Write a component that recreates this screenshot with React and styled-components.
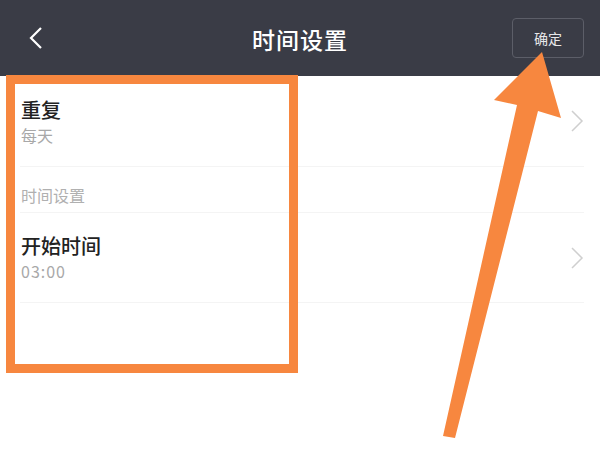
import React from 'react';
import styled, { createGlobalStyle } from 'styled-components';

const Global = createGlobalStyle`
  html, body { margin: 0; padding: 0; background: #fff; }
  body { font-family: "Noto Sans CJK SC", "Noto Sans", sans-serif; }
`;

const Page = styled.div`
  position: relative;
  width: 600px;
  height: 462px;
  overflow: hidden;
  background: #fff;
`;

const Header = styled.div`
  height: 76px;
  background: #3a3c46;
  display: grid;
  grid-template-columns: 100px 1fr 100px;
  align-items: center;
  color: #fff;
`;

const Back = styled.div`
  padding-left: 26px;
  display: flex;
  align-items: center;
`;

const Title = styled.div`
  text-align: center;
  font-size: 23px;
  font-weight: 500;
  letter-spacing: 1px;
  padding-top: 2px;
`;

const Right = styled.div`
  display: flex;
  justify-content: flex-end;
  padding-right: 16px;
`;

const Confirm = styled.div`
  width: 70px;
  height: 38px;
  border: 1px solid #5c5e68;
  border-radius: 4px;
  display: flex;
  align-items: center;
  justify-content: center;
  font-size: 14px;
  color: #e8e8ea;
`;

const Row = styled.div`
  height: ${p => p.h}px;
  margin-left: 20px;
  margin-right: 16px;
  border-bottom: 1px solid #f4f4f4;
  display: flex;
  align-items: center;
  justify-content: space-between;
  box-sizing: border-box;
`;

const Texts = styled.div`
  display: flex;
  flex-direction: column;
  gap: 5px;
  padding-left: 1px;
`;

const Label = styled.div`
  font-size: 20px;
  line-height: 23px;
  font-weight: 500;
  color: #222;
`;

const Sub = styled.div`
  font-size: 16px;
  line-height: 19px;
  color: #a8a8a8;
  letter-spacing: ${p => (p.wide ? '1px' : '0')};
`;

const Section = styled.div`
  font-size: 16px;
  color: #b0b0b0;
  padding-left: 1px;
  padding-top: 10px;
`;

const Frame = styled.div`
  position: absolute;
  left: 6px;
  top: 75px;
  width: 292px;
  height: 298px;
  box-sizing: border-box;
  border: 9px solid #f7873f;
  pointer-events: none;
`;

const Arrow = styled.svg`
  position: absolute;
  left: 0;
  top: 0;
  pointer-events: none;
`;

const Chevron = () => (
  <svg width="14" height="24" viewBox="0 0 14 24">
    <path d="M2 2 L12 12 L2 22" fill="none" stroke="#cfcfcf" strokeWidth="1.5" />
  </svg>
);

export default function App() {
  return (
    <Page>
      <Global />
      <Header>
        <Back>
          <svg width="20" height="24" viewBox="0 0 20 24">
            <path d="M15 2 L5 12 L15 22" fill="none" stroke="#fff" strokeWidth="2.2" />
          </svg>
        </Back>
        <Title>时间设置</Title>
        <Right>
          <Confirm>确定</Confirm>
        </Right>
      </Header>
      <Row h={91}>
        <Texts>
          <Label>重复</Label>
          <Sub>每天</Sub>
        </Texts>
        <Chevron />
      </Row>
      <Row h={46}>
        <Section>时间设置</Section>
      </Row>
      <Row h={90}>
        <Texts>
          <Label>开始时间</Label>
          <Sub wide>03:00</Sub>
        </Texts>
        <Chevron />
      </Row>
      <Frame />
      <Arrow width="600" height="462" viewBox="0 0 600 462">
        <polygon
          points="542,52 561,118 538,111 455,438 443,436 517,105 494,100"
          fill="#f7873f"
        />
      </Arrow>
    </Page>
  );
}
